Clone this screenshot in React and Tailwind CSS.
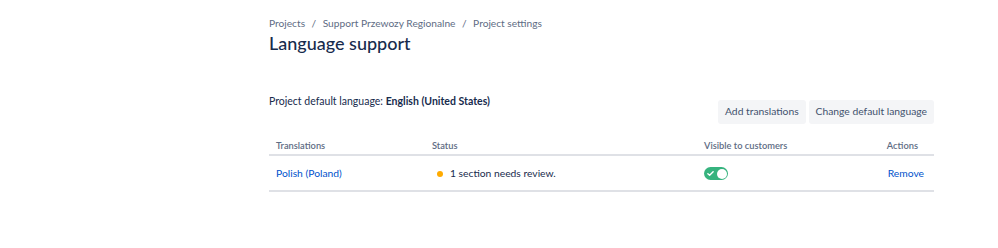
export default function App() {
  const font = { fontFamily: 'Lato, "Noto Sans", sans-serif' };
  return (
    <div className="w-[998px] h-[248px] bg-white" style={font}>
      <div className="ml-[269px] w-[665px] pt-[15px]">
        <div className="text-[10.2px] leading-[16px] text-[#5e6c84] flex gap-[6.5px]">
          <span>Projects</span>
          <span>/</span>
          <span>Support Przewozy Regionalne</span>
          <span>/</span>
          <span>Project settings</span>
        </div>
        <h1 className="mt-[0px] text-[18px] leading-[24px] font-medium text-[#172b4d]">Language support</h1>
        <div className="mt-[38px] text-[10.5px] leading-[16px] text-[#172b4d]">
          Project default language: <span className="font-bold">English (United States)</span>
        </div>
        <div className="flex justify-end gap-[3px] -mt-[9px]">
          <button className="h-[24px] px-[7px] rounded-[3px] bg-[#f4f5f7] text-[10.3px] text-[#42526e]">Add translations</button>
          <button className="h-[24px] px-[7px] rounded-[3px] bg-[#f4f5f7] text-[10.3px] text-[#42526e]">Change default language</button>
        </div>
        <div className="mt-[12px]">
          <div className="grid grid-cols-[156px_272px_1fr_auto] border-b-2 border-[#dfe1e6] h-[20px] pt-[2px] text-[9.3px] font-semibold text-[#5e6c84] items-center px-[7px]">
            <div>Translations</div>
            <div>Status</div>
            <div>Visible to customers</div>
            <div className="mr-[9px]">Actions</div>
          </div>
          <div className="grid grid-cols-[156px_272px_1fr_auto] border-b-2 border-[#dfe1e6] h-[36px] pt-[1px] text-[10.3px] items-center px-[7px]">
            <div className="text-[#0052cc]">Polish (Poland)</div>
            <div className="flex items-center text-[#172b4d]">
              <span className="w-[6px] h-[6px] rounded-full bg-[#ffab00] ml-[5px] mr-[7px]"></span>
              1 section needs review.
            </div>
            <div>
              <div className="w-[24px] h-[13px] rounded-full bg-[#36b37e] relative">
                <svg className="absolute left-[3px] top-[3px]" width="7" height="7" viewBox="0 0 8 8">
                  <path d="M1 4.2 L3 6 L7 2" stroke="white" strokeWidth="1.6" fill="none" strokeLinecap="round" strokeLinejoin="round" />
                </svg>
                <span className="absolute right-[1.5px] top-[1.5px] w-[10px] h-[10px] rounded-full bg-white"></span>
              </div>
            </div>
            <div className="text-[#0052cc] mr-[3px]">Remove</div>
          </div>
        </div>
      </div>
    </div>
  );
}
